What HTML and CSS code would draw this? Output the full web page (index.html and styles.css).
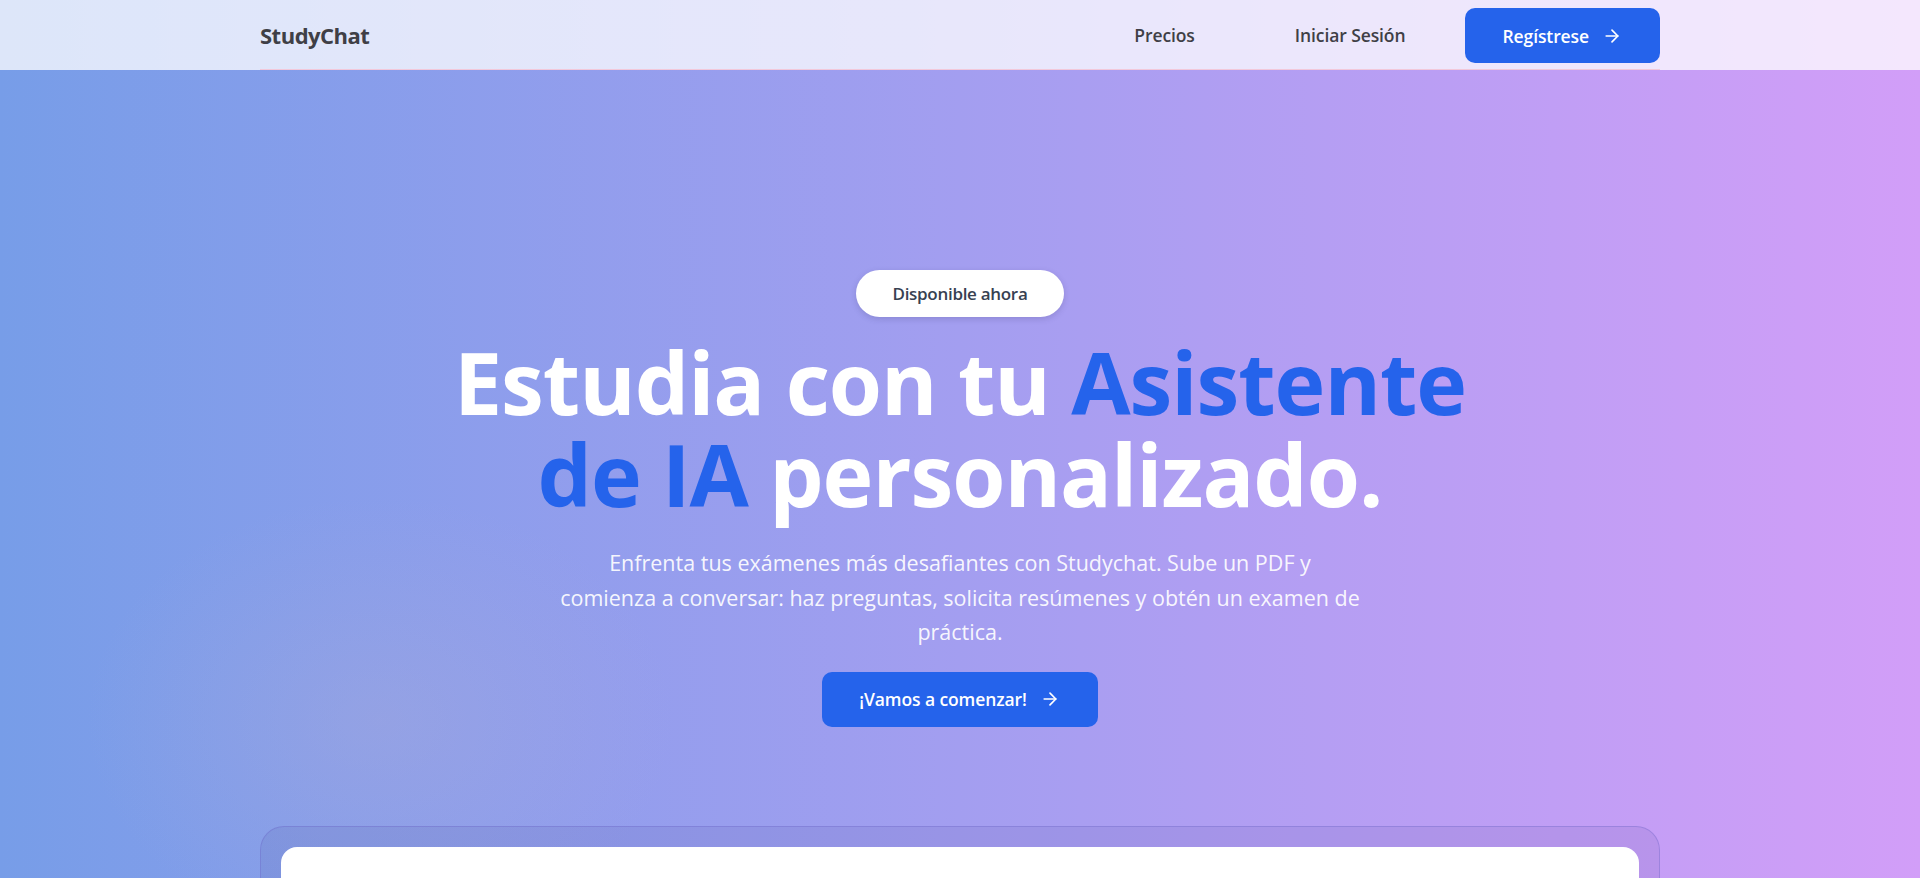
FILE: index.html
```html
<!DOCTYPE html>
<html lang="es">
<head>
<meta charset="utf-8">
<title>StudyChat</title>
<link rel="stylesheet" href="styles.css">
</head>
<body>
<div class="page">
  <header class="nav">
    <div class="nav-inner">
      <a class="logo" href="#">StudyChat</a>
      <nav class="nav-links">
        <a class="nav-link nav-link-prices" href="#">Precios</a>
        <a class="nav-link nav-link-login" href="#">Iniciar Sesión</a>
        <a class="btn btn-nav" href="#">Regístrese
          <svg class="arrow" viewBox="0 0 24 24" fill="none" stroke="currentColor" stroke-width="2" stroke-linecap="round" stroke-linejoin="round"><path d="M5 12h14"/><path d="m12 5 7 7-7 7"/></svg>
        </a>
      </nav>
    </div>
  </header>

  <main class="hero">
    <span class="badge">Disponible ahora</span>
    <h1 class="headline">Estudia con tu <span class="accent">Asistente</span><br><span class="accent">de IA</span> personalizado.</h1>
    <p class="lead">Enfrenta tus exámenes más desafiantes con Studychat. Sube un PDF y<br>comienza a conversar: haz preguntas, solicita resúmenes y obtén un examen de práctica.</p>
    <a class="btn btn-hero" href="#">¡Vamos a comenzar!
      <svg class="arrow" viewBox="0 0 24 24" fill="none" stroke="currentColor" stroke-width="2" stroke-linecap="round" stroke-linejoin="round"><path d="M5 12h14"/><path d="m12 5 7 7-7 7"/></svg>
    </a>

    <div class="preview-frame">
      <div class="preview-card"></div>
    </div>
  </main>
</div>
</body>
</html>
```

FILE: styles.css
```css
* { box-sizing: border-box; }

html, body {
  margin: 0;
  padding: 0;
}

body {
  font-family: "Open Sans", "Noto Sans", sans-serif;
  color: #3f3f46;
  overflow: hidden;
}

a { text-decoration: none; }

.page {
  min-height: 878px;
  background:
    radial-gradient(ellipse 420px 320px at 380px 720px, rgba(170, 170, 215, 0.35), rgba(170, 170, 215, 0) 70%),
    linear-gradient(90deg, #779de8 0%, #a39ef0 50%, #d29ef8 100%);
}

.nav {
  height: 70px;
  background: rgba(255, 255, 255, 0.75);
}

.nav-inner {
  width: 1400px;
  height: 70px;
  margin: 0 auto;
  display: flex;
  align-items: center;
  justify-content: space-between;
  border-bottom: 1px solid #f2c8da;
}

.logo {
  font-size: 22px;
  font-weight: 700;
  color: #3f3f46;
  letter-spacing: -0.5px;
}

.nav-links {
  display: flex;
  align-items: center;
}

.nav-link {
  font-size: 17.5px;
  font-weight: 600;
  color: #3f3f46;
  letter-spacing: -0.1px;
}

.nav-link-prices { margin-right: 100px; }
.nav-link-login { margin-right: 60px; }

.btn {
  display: inline-flex;
  align-items: center;
  gap: 13px;
  height: 55px;
  padding: 0 38px 0 37px;
  background: #2563eb;
  color: #ffffff;
  border-radius: 10px;
  font-size: 17.5px;
  font-weight: 600;
  letter-spacing: -0.1px;
}

.btn-nav {
  margin-top: 2px;
}

.arrow {
  width: 20px;
  height: 20px;
  flex: none;
}

.hero {
  display: flex;
  flex-direction: column;
  align-items: center;
  text-align: center;
  padding-top: 200px;
}

.badge {
  display: inline-flex;
  align-items: center;
  height: 47px;
  padding: 0 37px;
  background: #ffffff;
  border-radius: 999px;
  font-size: 17px;
  font-weight: 600;
  color: #374151;
  letter-spacing: -0.3px;
  box-shadow: 0 2px 6px rgba(40, 40, 90, 0.18);
}

.headline {
  margin: 19px 0 0;
  font-size: 86px;
  line-height: 92px;
  font-weight: 700;
  color: #ffffff;
  letter-spacing: -1px;
}

.accent { color: #2563eb; }

.lead {
  width: 820px;
  margin: 26px 0 0;
  font-size: 21.5px;
  line-height: 34.5px;
  color: rgba(255, 255, 255, 0.93);
}

.btn-hero {
  margin-top: 22px;
}

.preview-frame {
  width: 1400px;
  margin-top: 99px;
  padding: 20px;
  border-radius: 24px;
  background: rgba(40, 40, 110, 0.08);
  border: 1px solid rgba(110, 100, 200, 0.35);
}

.preview-card {
  height: 600px;
  background: #ffffff;
  border-radius: 16px;
}
```
